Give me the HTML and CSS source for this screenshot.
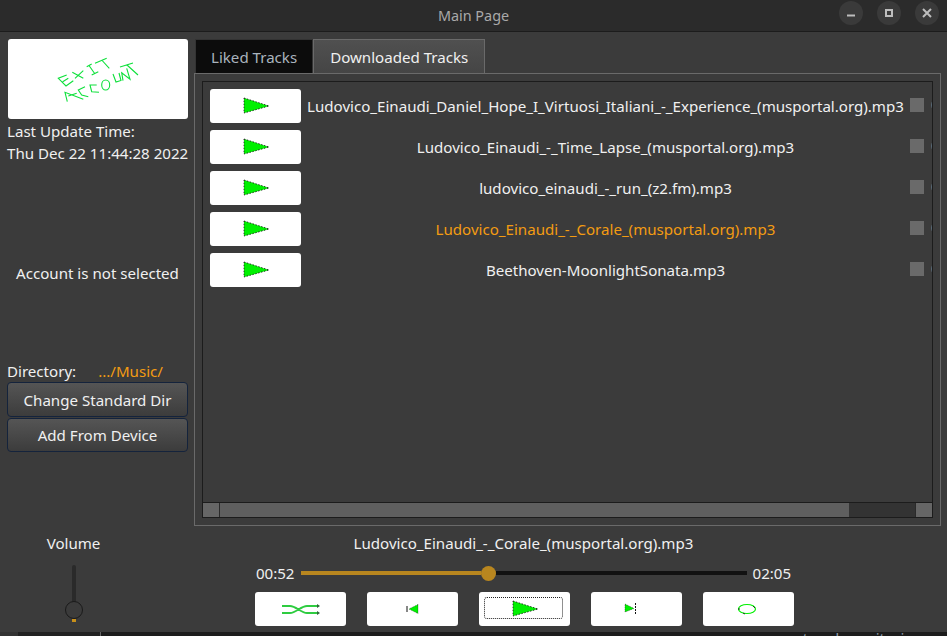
FILE: index.html
```html
<!DOCTYPE html>
<html lang="en">
<head>
    <meta charset="UTF-8">
    <title>Main Page</title>
    <link rel="stylesheet" href="styles.css">
</head>
<body>
    <div class="window">
        <div class="titlebar">
            <span class="title">Main Page</span>
            <div class="win-buttons">
                <span class="win-btn"><svg width="12" height="12" viewBox="0 0 12 12"><path d="M2 8.500h8" stroke="#bdbdbd" stroke-width="2"/></svg></span>
                <span class="win-btn"><svg width="12" height="12" viewBox="0 0 12 12"><path d="M3 3h6v6H3z" fill="none" stroke="#bdbdbd" stroke-width="2"/></svg></span>
                <span class="win-btn"><svg width="12" height="12" viewBox="0 0 12 12"><path d="M2 2l8 8M10 2l-8 8" stroke="#bdbdbd" stroke-width="2"/></svg></span>
            </div>
        </div>

        <div class="main">
            <div class="sidebar">
                <button class="exit-btn">
                    <svg width="180" height="80" viewBox="8 39 180 80" fill="none" stroke="#0de03a" stroke-width="1.100">
                        <path d="M66.700 75L58.300 78.300 66 86 73.300 80.700M62.700 81.700L68.300 78.300"/>
                        <path d="M72.300 72.300L83.300 78.300M83.300 70.700L75 78.300"/>
                        <path d="M86.700 66.700L91.700 64M89 65.500L95 74M91.700 75L98.300 71.700"/>
                        <path d="M95 63.300L106.700 58.300M101.700 60L109.300 68.300"/>
                        <path d="M67.300 101.700L65 92.300 83.300 99.300M68.300 96L76.700 93.300"/>
                        <path d="M85 86.700L78.300 90 81.700 95 88.300 96.700"/>
                        <path d="M96.700 85L90 85 91.700 91.700 99 92.300"/>
                        <ellipse cx="105.700" cy="85" rx="4" ry="5"/>
                        <path d="M113 74L116 82 121 80.500 119 73"/>
                        <path d="M123 80.700L121.700 72.700 130 79.300 126.700 68.300"/>
                        <path d="M120 67L133 63M127 65L138 75"/>
                    </svg>
                </button>
                <div class="update">Last Update Time:<br>Thu Dec 22 11:44:28 2022</div>
                <div class="account">Account is not selected</div>
                <div class="dir-row"><span>Directory:</span><span class="orange">.../Music/</span></div>
                <button class="qt-btn">Change Standard Dir</button>
                <button class="qt-btn second">Add From Device</button>
            </div>

            <div class="content">
                <div class="tabs">
                    <div class="tab active">Liked Tracks</div>
                    <div class="tab">Downloaded Tracks</div>
                </div>
                <div class="tab-pane">
                    <div class="list">
                        <div class="rows">
                            <div class="row">
                                <button class="play"><svg class="tri" width="28" height="20" viewBox="0 0 28 20"><path d="M2 2l25 8-25 7z"/></svg></button>
                                <span class="name">Ludovico_Einaudi_Daniel_Hope_I_Virtuosi_Italiani_-_Experience_(musportal.org).mp3</span>
                                <span class="check"></span>
                                <span class="radio"></span>
                            </div>
                            <div class="row">
                                <button class="play"><svg class="tri" width="28" height="20" viewBox="0 0 28 20"><path d="M2 2l25 8-25 7z"/></svg></button>
                                <span class="name">Ludovico_Einaudi_-_Time_Lapse_(musportal.org).mp3</span>
                                <span class="check"></span>
                                <span class="radio"></span>
                            </div>
                            <div class="row">
                                <button class="play"><svg class="tri" width="28" height="20" viewBox="0 0 28 20"><path d="M2 2l25 8-25 7z"/></svg></button>
                                <span class="name">ludovico_einaudi_-_run_(z2.fm).mp3</span>
                                <span class="check"></span>
                                <span class="radio"></span>
                            </div>
                            <div class="row">
                                <button class="play"><svg class="tri" width="28" height="20" viewBox="0 0 28 20"><path d="M2 2l25 8-25 7z"/></svg></button>
                                <span class="name orange">Ludovico_Einaudi_-_Corale_(musportal.org).mp3</span>
                                <span class="check"></span>
                                <span class="radio"></span>
                            </div>
                            <div class="row">
                                <button class="play"><svg class="tri" width="28" height="20" viewBox="0 0 28 20"><path d="M2 2l25 8-25 7z"/></svg></button>
                                <span class="name">Beethoven-MoonlightSonata.mp3</span>
                                <span class="check"></span>
                                <span class="radio"></span>
                            </div>
                        </div>
                        <div class="hscroll">
                            <span class="arrow"></span>
                            <div class="track"><div class="thumb"></div></div>
                            <span class="arrow"></span>
                        </div>
                    </div>
                </div>
            </div>
        </div>

        <div class="bottom">
            <div class="volume">
                <span>Volume</span>
                <div class="vol-slider">
                    <div class="vol-track"></div>
                    <div class="vol-handle"></div>
                    <div class="vol-fill"></div>
                </div>
            </div>
            <div class="player">
                <div class="now">Ludovico_Einaudi_-_Corale_(musportal.org).mp3</div>
                <div class="seek">
                    <span>00:52</span>
                    <div class="seek-bar">
                        <div class="seek-done"></div>
                        <div class="seek-handle"></div>
                        <div class="seek-rest"></div>
                    </div>
                    <span>02:05</span>
                </div>
                <div class="controls">
                    <button class="ctl"><svg width="40" height="14" viewBox="0 0 40 14" fill="none" stroke="#2ecc40" stroke-width="2"><path d="M1 4h8c6 0 11 7 17 7h11M1 11h8c6 0 11-7 17-7h11"/><path d="M36 2l3 2-3 2zM36 9l3 2-3 2z" fill="#2a6a35" stroke="none"/></svg></button>
                    <button class="ctl"><svg width="14" height="12" viewBox="0 0 14 12"><path d="M1 3v6" stroke="#111"/><path d="M12 1.500v9L3 6z" fill="#00f000" stroke="#111" stroke-width="0.5" stroke-dasharray="1 1"/></svg></button>
                    <button class="ctl focus"><svg class="tri" width="28" height="20" viewBox="0 0 28 20"><path d="M2 2l25 8-25 7z"/></svg></button>
                    <button class="ctl"><svg class="shift-next" width="20" height="14" viewBox="0 0 20 14"><path d="M1 2l9 4.500-9 3.500z" fill="#00f000" stroke="#111" stroke-width="0.5" stroke-dasharray="1 1"/><path d="M11.500 1v11" stroke="#111" stroke-dasharray="2 1"/></svg></button>
                    <button class="ctl"><svg class="shift-loop" width="20" height="12" viewBox="0 0 20 12"><ellipse cx="10" cy="6" rx="8.500" ry="4.500" fill="none" stroke="#00f000" stroke-width="1.200"/><path d="M1 6h2M16 3l2 2M6 10l2 1" stroke="#111" stroke-width="0.800"/></svg></button>
                </div>
            </div>
        </div>
        <div class="behind"><span class="behind-left">Of</span><span class="behind-text">account and monitoring</span></div>
    </div>
</body>
</html>
```

FILE: styles.css
```css
* { box-sizing: border-box; }
html, body { margin: 0; padding: 0; }
body { width: 947px; height: 636px; overflow: hidden; background: #232323; font-family: "Noto Sans", sans-serif; font-size: 15.1px; color: #f0f0f0; }
button { font-family: inherit; font-size: inherit; color: inherit; padding: 0; }
.window { width: 947px; height: 636px; display: flex; flex-direction: column; overflow: hidden; }
.orange { color: #f39c12; }

.titlebar { height: 32px; flex: none; background: #2b2b2b; border-bottom: 1px solid #1c1c1c; display: flex; align-items: center; justify-content: center; position: relative; }
.title { font-size: 14.4px; color: #a9a9a9; }
.win-buttons { position: absolute; right: 8px; top: 1px; display: flex; gap: 14px; }
.win-btn { width: 24px; height: 24px; border-radius: 50%; background: #3a3a3a; display: flex; align-items: center; justify-content: center; }

.main { height: 494px; flex: none; background: #3b3b3b; display: flex; padding: 7px 6px 0 7px; }
.sidebar { width: 181px; flex: none; display: flex; flex-direction: column; }
.exit-btn { width: 180px; height: 80px; margin-left: 1px; background: #fff; border: none; border-radius: 3px; display: block; }
.exit-btn svg { display: block; }
.update { line-height: 22px; margin-top: 1px; white-space: nowrap; }
.account { margin-top: 98px; text-align: center; line-height: 22px; }
.dir-row { margin-top: 76px; display: flex; gap: 22px; line-height: 22px; }
.qt-btn { height: 35px; background: linear-gradient(#555555, #3c3c3c); border: 1px solid #14233c; border-radius: 4px; color: #f0f0f0; }
.qt-btn.second { height: 34px; margin-top: 1px; }

.content { margin-left: 6px; width: 747px; min-width: 0; flex: none; display: flex; flex-direction: column; }
.tabs { display: flex; height: 34px; flex: none; padding-left: 1px; }
.tab { padding: 0 16px; display: flex; align-items: center; background: linear-gradient(#505050, #454545); border: 1px solid #6a6a6a; border-bottom: none; }
.tab.active { padding: 0 15px; background: #0c0c0c; border-color: #333; color: #aab4be; }
.tab-pane { height: 453px; border: 1px solid #6a6a6a; padding: 7px; overflow: hidden; }
.list { height: 437px; border: 1px solid #1c1c1c; display: flex; flex-direction: column; justify-content: space-between; overflow: hidden; }
.rows { padding: 7px 0 0 7px; display: flex; flex-direction: column; gap: 7px; }
.row { height: 34px; display: flex; align-items: center; }
.play { width: 91px; height: 34px; flex: none; background: #fff; border: none; border-radius: 3px; display: flex; align-items: center; justify-content: center; }
.name { width: 609px; flex: none; text-align: center; white-space: nowrap; }
.check { width: 14px; height: 14px; flex: none; background: #6a6a6a; margin-top: -2px; }
.radio { width: 14px; height: 14px; flex: none; margin: -2px 0 0 7px; border: 1px solid #5a6a78; border-radius: 50%; }
.tri path { fill: #00f000; stroke: #111; stroke-width: 0.8; stroke-dasharray: 1.500 1.500; }

.hscroll { height: 15px; flex: none; display: flex; background: #333; border-top: 1px solid #1c1c1c; }
.arrow { width: 17px; flex: none; background: #666; border-right: 1px solid #2a2a2a; }
.hscroll .arrow:last-child { border-right: none; border-left: 1px solid #2a2a2a; }
.track { flex: 1; }
.thumb { width: 629px; height: 100%; background: #5f5f5f; }

.bottom { height: 106px; flex: none; background: #3b3b3b; display: flex; padding-right: 45px; }
.volume { width: 147px; flex: none; display: flex; flex-direction: column; align-items: center; padding-top: 6px; line-height: 22px; }
.vol-slider { width: 20px; height: 60px; margin-top: 11px; position: relative; }
.vol-track { width: 4px; height: 40px; margin-left: 8px; background: #2a2a2a; border-radius: 2px; }
.vol-handle { position: absolute; left: 1px; top: 36px; width: 18px; height: 18px; border-radius: 50%; border: 1px solid #1a1a1a; background: #3b3b3b; }
.vol-fill { position: absolute; left: 8px; top: 54px; width: 4px; height: 3px; background: #c8901a; }
.player { flex: 1; display: flex; flex-direction: column; align-items: center; padding-top: 6px; }
.now { line-height: 22px; text-align: center; margin-right: 2px; }
.seek { display: flex; align-items: center; gap: 6px; margin: 8px 2px 0 0; line-height: 22px; }
.seek-bar { width: 446px; height: 16px; display: flex; align-items: center; }
.seek-done { width: 180px; height: 4px; background: #b8861f; }
.seek-handle { width: 15px; height: 15px; border-radius: 50%; background: #b8861f; flex: none; }
.seek-rest { flex: 1; height: 4px; background: #111; }
.controls { display: flex; gap: 21px; margin-top: 8px; }
.ctl { width: 91px; height: 34px; background: #fff; border: none; border-radius: 3px; display: flex; align-items: center; justify-content: center; position: relative; }
.ctl.focus::after { content: ""; position: absolute; left: 5px; top: 5px; right: 7px; bottom: 7px; border: 1px dotted #222; border-radius: 3px; }
.shift-next { margin-right: 6px; }
.shift-loop { margin-right: 3px; }

.behind { height: 4px; flex: none; background: linear-gradient(to right, #333 18px, #222 18px, #222 100px, #666 100px, #666 101px, #1c1c1c 101px); overflow: hidden; position: relative; }
.behind-left { position: absolute; left: 35px; top: 1px; font-size: 13px; line-height: 16px; color: #8a97a5; }
.behind-text { position: absolute; left: 752px; top: -4px; color: #8a97a5; white-space: nowrap; }
```
